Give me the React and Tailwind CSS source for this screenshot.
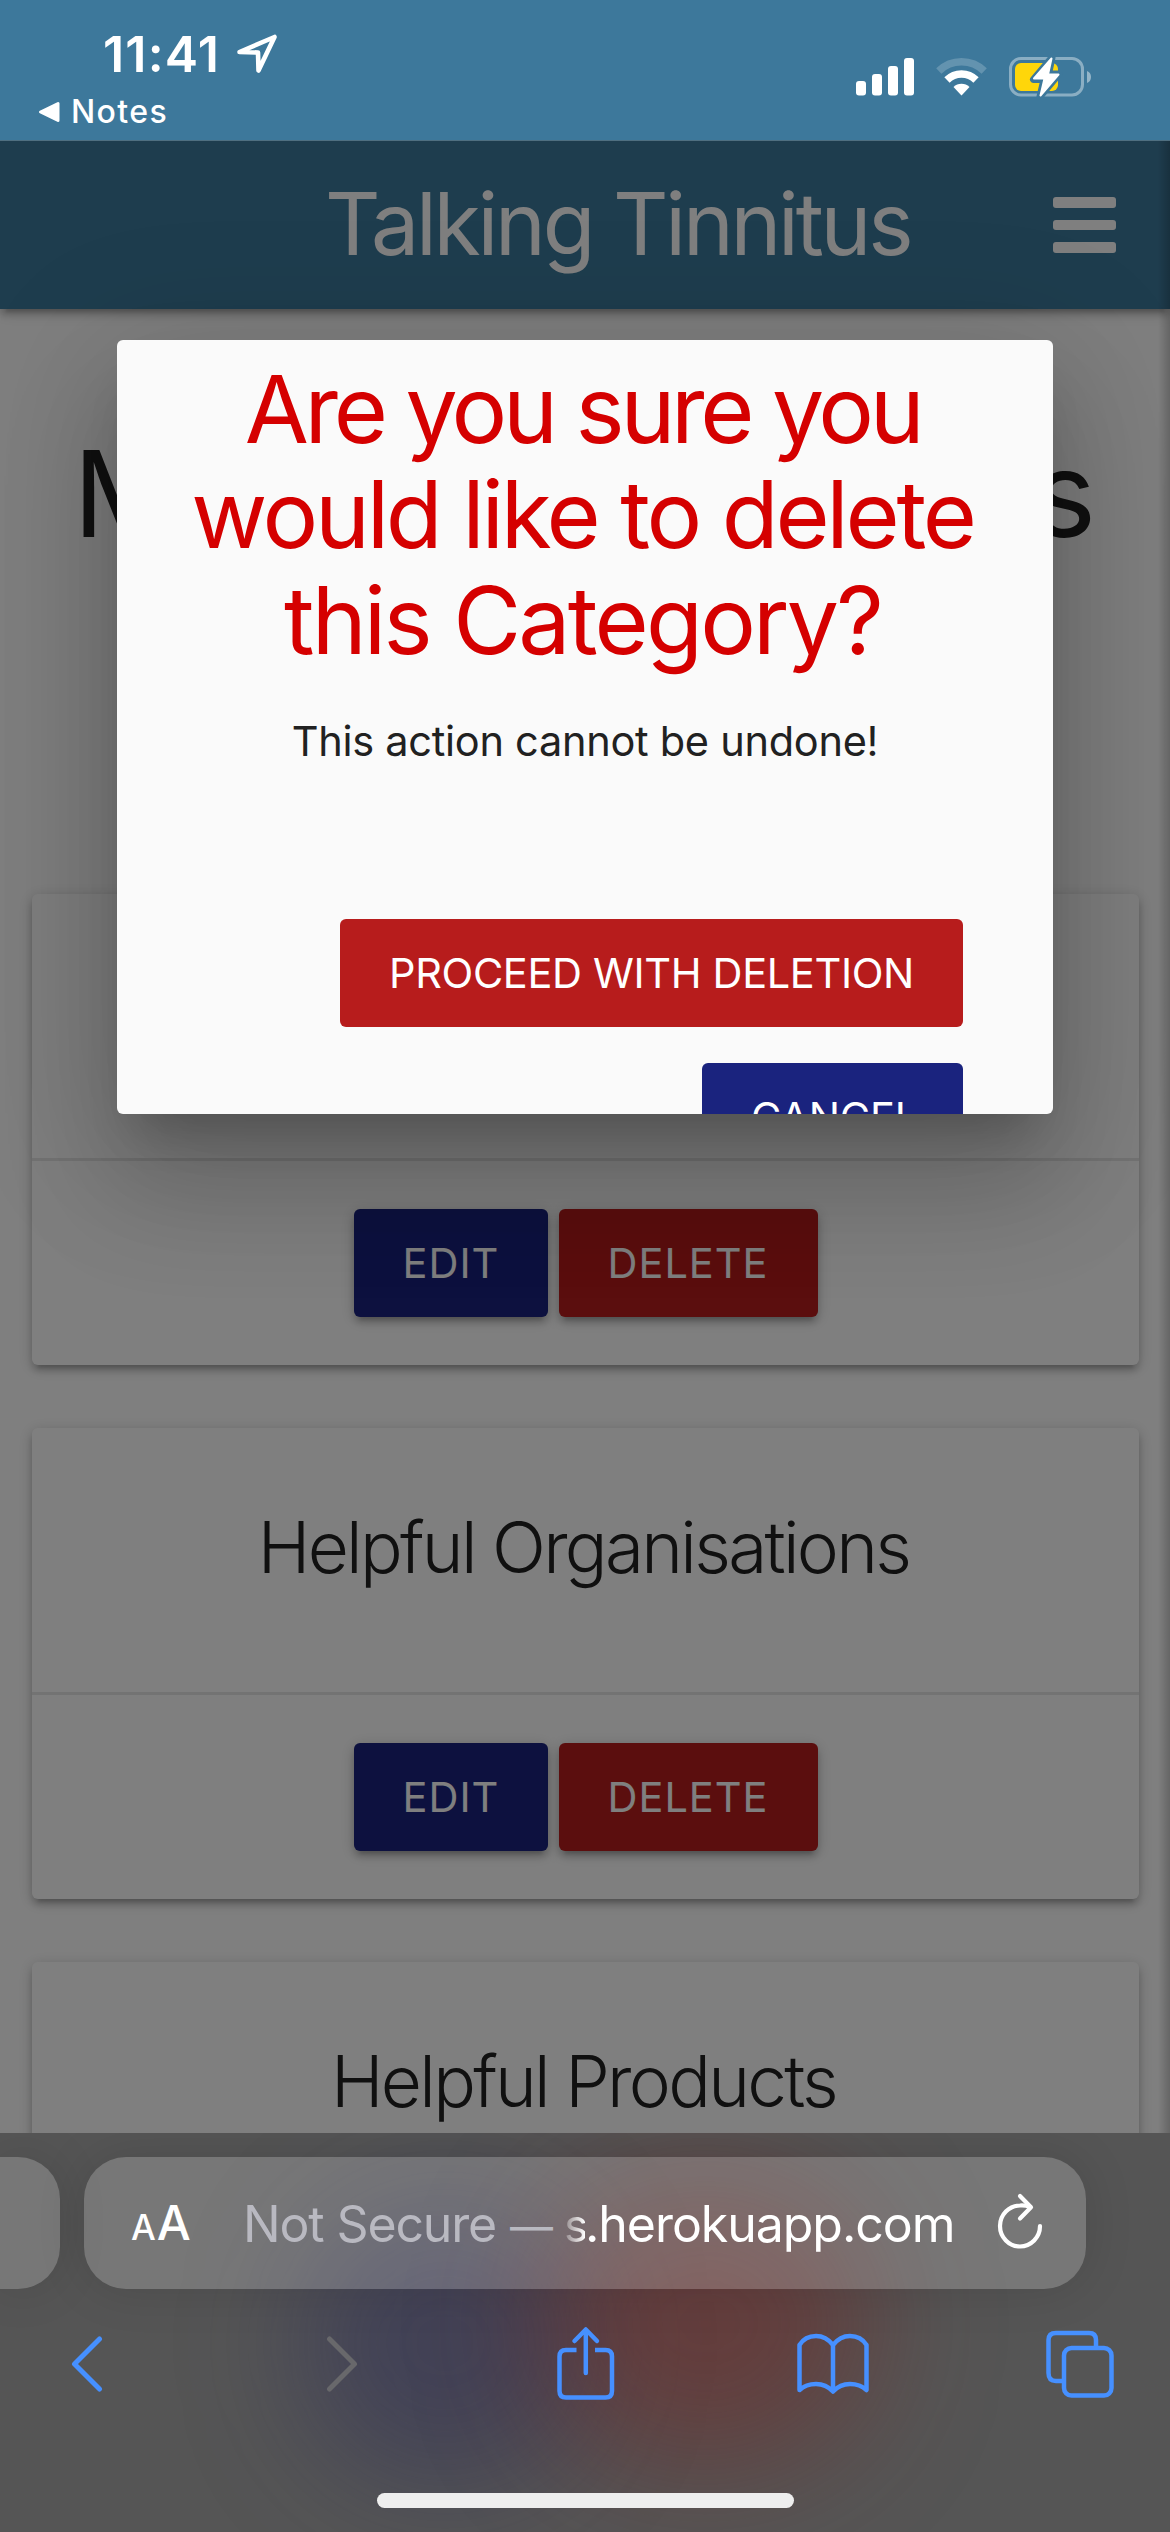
function StatusBar() {
  return (
    <div className="relative z-20 flex h-[141px] justify-between border-b border-[#4f6f80] bg-[#3d789b] text-white">
      <div className="pl-[38px]">
        <div className="mt-[24px] flex h-[60px] items-center gap-[17px] pl-[65px]">
          <span className="text-[50px] leading-[60px] font-semibold tracking-[1.200px]">11:41</span>
          <svg className="h-[40px] w-[42px]" viewBox="0 0 42 40" fill="none" stroke="currentColor" strokeWidth="4.600" strokeLinejoin="round">
            <path d="M2.500 18 L37.500 3 L21.500 36.500 L21 18.500 Z" />
          </svg>
        </div>
        <div className="flex h-[56px] items-center gap-[11px]">
          <svg className="h-[22px] w-[22px]" viewBox="0 0 22 22" fill="currentColor" stroke="currentColor" strokeWidth="3" strokeLinejoin="round">
            <path d="M2.500 11 L20 2.500 V19.500 Z" />
          </svg>
          <span className="text-[32px] leading-[40px] font-medium tracking-[1.400px]">Notes</span>
        </div>
      </div>
      <div className="mt-[56px] mr-[78px] flex h-[42px] items-center gap-[22px]">
        <svg className="h-[38px] w-[58px]" viewBox="0 0 58 38" fill="currentColor">
          <rect x="0" y="23" width="10" height="14.500" rx="3" />
          <rect x="16" y="16" width="10" height="21.500" rx="3" />
          <rect x="32" y="8" width="10" height="29.500" rx="3" />
          <rect x="48" y="0" width="10" height="37.500" rx="3" />
        </svg>
        <svg className="h-[38px] w-[51px]" viewBox="0 0 51 38" fill="none" stroke="currentColor">
          <path d="M2.800 13 A32.500 32.500 0 0 1 48.200 13" strokeWidth="7.500" opacity="0.2" />
          <path d="M11 22 A20.500 20.500 0 0 1 40 22" strokeWidth="7.500" />
          <path d="M17.500 29 A11.500 11.500 0 0 1 33.500 29 L25.500 37.500 Z" fill="currentColor" stroke="none" />
        </svg>
        <svg className="h-[42px] w-[83px]" viewBox="0 0 83 42" fill="none">
          <rect x="1.500" y="2.500" width="72" height="36.500" rx="10.500" stroke="#fff" strokeOpacity="0.4" strokeWidth="3" />
          <path d="M78 15 Q82 16.500 82 21 Q82 25.500 78 27 Z" fill="#fff" fillOpacity="0.45" />
          <rect x="6" y="7" width="43" height="28" rx="6" fill="#ffd60a" />
          <path d="M43 1.500 L24.500 23.500 H35 L31 40.500 L50 18 H39.500 Z" fill="#fff" stroke="#3d789b" strokeWidth="7" strokeLinejoin="round" />
          <path d="M42.500 2.500 L25 22.500 H35.500 L31.500 39.500 L49.500 18.500 H39 Z" fill="#fff" stroke="#fff" strokeWidth="2" strokeLinejoin="round" />
        </svg>
      </div>
    </div>
  );
}

function Header() {
  return (
    <header className="relative z-10 flex h-[168px] items-center bg-[#3d7a9c] text-white shadow-[0_6px_6px_rgba(0,0,0,0.14),0_9px_3px_-6px_rgba(0,0,0,0.12),0_3px_15px_rgba(0,0,0,0.2)]">
      <h1 className="ml-[325px] h-[104px] w-[728px] text-[86px] leading-[102px] font-normal tracking-[-3.250px] whitespace-nowrap">
        Talking Tinnitus
      </h1>
      <div className="flex w-[63px] flex-col gap-[12px]">
        <span className="h-[10.500px] rounded-[3px] bg-white" />
        <span className="h-[10.500px] rounded-[3px] bg-white" />
        <span className="h-[10.500px] rounded-[3px] bg-white" />
      </div>
    </header>
  );
}

function Button({ children, className }) {
  return (
    <button className={"h-[108px] rounded-[6px] px-[49px] text-[41.500px] leading-[108px] font-normal whitespace-nowrap text-white " + className}>
      {children}
    </button>
  );
}

const raised = "shadow-[0_6px_6px_rgba(0,0,0,0.14),0_9px_3px_-6px_rgba(0,0,0,0.12),0_3px_15px_rgba(0,0,0,0.2)]";

function Card({ title, tracking }) {
  return (
    <section className={"h-[471px] shrink-0 rounded-[6px] bg-white " + raised}>
      <div className="h-[264px] pt-[72px] pr-[4px]">
        <h3 className={"text-center text-[71px] leading-[94px] font-light whitespace-nowrap text-[#212121] " + tracking}>{title}</h3>
      </div>
      <div className="flex justify-center gap-[11px] border-t-[3px] border-[#e6e6e6] pt-[48px]">
        <Button className={"w-[194px] bg-[#1a237e] tracking-[1px] " + raised}>EDIT</Button>
        <Button className={"w-[259px] bg-[#b71c1c] tracking-[1px] " + raised}>DELETE</Button>
      </div>
    </section>
  );
}

function Modal() {
  return (
    <div className="absolute top-[199px] left-[117px] h-[774px] w-[936px] overflow-hidden rounded-[6px] bg-[#fafafa] shadow-[0_72px_114px_9px_rgba(0,0,0,0.14),0_27px_138px_24px_rgba(0,0,0,0.12),0_33px_45px_-21px_rgba(0,0,0,0.2)]">
      <h2 className="mt-[17px] pr-[5px] text-center text-[93px] leading-[105.300px] font-normal text-[#d50000]">
        <span className="block tracking-[-4.300px]">Are you sure you</span>
        <span className="block tracking-[-3.300px]">would like to delete</span>
        <span className="block tracking-[-2.800px]">this Category?</span>
      </h2>
      <p className="mt-[36px] text-center text-[41.500px] leading-[65px] tracking-[-0.280px] text-[#212121]">This action cannot be undone!</p>
      <div className="mt-[145px] flex flex-col items-end gap-[36px] pr-[90px]">
        <Button className="w-[623px] bg-[#b71c1c] tracking-[-0.350px]">PROCEED WITH DELETION</Button>
        <Button className="w-[261px] bg-[#1a237e] tracking-[-0.200px]">CANCEL</Button>
      </div>
    </div>
  );
}

function BrowserBar() {
  return (
    <footer className="absolute bottom-0 left-0 z-30 h-[399px] w-full overflow-hidden bg-[#555555]">
      <div className="absolute top-[70px] left-[300px] h-[280px] w-[290px] rounded-full bg-[#1c1c58]/35 blur-[60px]" />
      <div className="absolute top-[50px] left-[540px] h-[280px] w-[330px] rounded-full bg-[#7a1a16]/40 blur-[65px]" />
      <div className="relative flex h-[156px] gap-[24px] pt-[24px]">
        <div className="h-[132px] w-[60px] shrink-0 rounded-r-[42px] bg-white/20 shadow-[0_0_50px_rgba(0,0,0,0.12)]" />
        <div className="flex h-[132px] w-[1002px] items-center rounded-[42px] bg-white/20 pl-[47px] whitespace-nowrap text-white shadow-[0_0_50px_rgba(0,0,0,0.12)]">
          <div className="mt-[4px] flex w-[112px] items-baseline gap-[1px] leading-[60px] font-medium">
            <span className="text-[35px]">A</span>
            <span className="text-[48px] tracking-[-1px]">A</span>
          </div>
          <div className="flex h-[60px] items-baseline text-[50px] leading-[62px] tracking-[-0.800px]">
            <span className="flex w-[321px] items-baseline gap-[14px] text-[#b9b9c1]">
              <span className="tracking-[-1.150px]">Not Secure</span>
              <span className="text-[43px]">—</span>
            </span>
            <span className="w-[21px] bg-gradient-to-r from-white/20 to-white bg-clip-text text-[46px] text-transparent">s</span>
            <span className="w-[412px] tracking-[-1.050px]">.herokuapp.com</span>
          </div>
          <svg className="mb-[5px] h-[56px] w-[46px]" viewBox="0 0 46 56" fill="none" stroke="#fff" strokeWidth="4.200" strokeLinecap="round" strokeLinejoin="round">
            <path d="M43 33 A20 20.500 0 1 1 23 12.500 C27 12 30 12.800 33 14" />
            <path d="M23 3 L34 14.300 L23 25.500" />
          </svg>
        </div>
      </div>
      <nav className="relative flex h-[150px] items-center pl-[71px] text-[#4690ff]">
        <svg className="mr-[223px] h-[56px] w-[32px]" viewBox="0 0 32 56" fill="none" stroke="currentColor" strokeWidth="5" strokeLinecap="round" strokeLinejoin="round">
          <path d="M28.500 3 L3.500 28 L28.500 53" />
        </svg>
        <svg className="mr-[199px] h-[56px] w-[32px] text-[#68686b]" viewBox="0 0 32 56" fill="none" stroke="currentColor" strokeWidth="5" strokeLinecap="round" strokeLinejoin="round">
          <path d="M3.500 3 L28.500 28 L3.500 53" />
        </svg>
        <svg className="mr-[182px] h-[76px] w-[58px]" viewBox="0 0 58 76" fill="none" stroke="currentColor" strokeWidth="4.500" strokeLinejoin="round">
          <path d="M19.500 24 H9 Q2.500 24 2.500 30.500 V65 Q2.500 71.500 9 71.500 H48.500 Q55 71.500 55 65 V30.500 Q55 24 48.500 24 H38" />
          <path d="M28.800 47 V5 M17.500 15 L28.800 3.500 L40 15" strokeLinecap="round" />
        </svg>
        <svg className="mr-[177px] h-[62px] w-[72px]" viewBox="0 0 72 62" fill="none" stroke="currentColor" strokeWidth="4.500" strokeLinejoin="round">
          <path d="M36 12 Q29 3 19 3 Q8 3 2.500 12 V57 Q9 51 19 51 Q29 51 36 58.500 Q43 51 53 51 Q63 51 69.500 57 V12 Q64 3 53 3 Q43 3 36 12 V58" />
        </svg>
        <svg className="h-[68px] w-[68px]" viewBox="0 0 68 68" fill="none" stroke="currentColor" strokeWidth="4.500">
          <rect x="18" y="18" width="47.500" height="47.500" rx="7.500" />
          <path d="M50 18 V10 Q50 3 43 3 H10 Q2.500 3 2.500 10 V43 Q2.500 51 10 51 H18" />
        </svg>
      </nav>
      <div className="relative mx-auto mt-[54px] h-[15px] w-[417px] rounded-full bg-[#eeeeee]" />
    </footer>
  );
}

export default function App() {
  return (
    <div className="relative h-[2532px] w-[1170px] overflow-hidden bg-white font-['Inter','Liberation_Sans',sans-serif]">
      <StatusBar />
      <div className="relative h-[2391px] overflow-hidden">
        <Header />
        <main className="flex flex-col">
          <h2 className="mt-[115px] h-[470px] pl-[73px] text-[120px] leading-[140px] tracking-[-5.400px] whitespace-nowrap text-[#212121]">
            Manage Categories
          </h2>
          <div className="flex flex-col gap-[63px] pr-[31px] pl-[32px]">
            <Card title="Hearing Loss" tracking="tracking-[-2.700px]" />
            <Card title="Helpful Organisations" tracking="tracking-[-2.700px]" />
            <Card title="Helpful Products" tracking="tracking-[-2.700px]" />
          </div>
        </main>
        <div className="absolute top-0 right-0 z-10 h-full w-[12px] bg-gradient-to-l from-black/20 to-transparent" />
        <div className="absolute inset-0 z-20 bg-black/50">
          <Modal />
        </div>
      </div>
      <BrowserBar />
    </div>
  );
}
